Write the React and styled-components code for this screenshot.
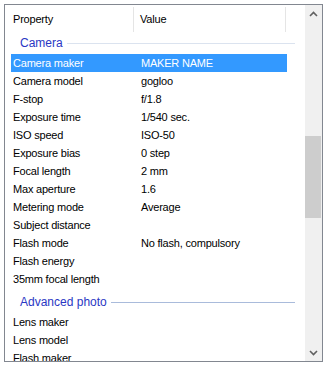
import React from 'react'
import styled, { createGlobalStyle } from 'styled-components'

const GlobalStyle = createGlobalStyle`
    body {
        margin: 0;
        background: #fff;
        font-family: "Liberation Sans", Arial, sans-serif;
        font-size: 11px;
        letter-spacing: -0.2px;
        color: #000;
    }
`

const Frame = styled.div`
    width: 317px;
    height: 356px;
    margin: 4px 0 0 4px;
    border: 1px solid #828790;
    display: flex;
    overflow: hidden;
    background: #fff;
`
const Content = styled.div`
    flex: 1;
    display: flex;
    flex-direction: column;
    overflow: hidden;
`
const Header = styled.div`
    height: 26px;
    flex-shrink: 0;
    display: grid;
    grid-template-columns: 129px 152px 1fr;
    align-items: start;
`
const HeaderCell = styled.div`
    display: flex;
    align-items: center;
    padding: 0 0 2px ${p => p.pad || 0}px;
    border-right: ${p => p.last ? 'none' : '1px solid #e5e5e5'};
    margin-top: 2px;
    height: 23px;
`
const GroupHeader = styled.div`
    height: 23px;
    flex-shrink: 0;
    margin-top: ${p => p.first ? 0 : 2}px;
    display: flex;
    align-items: center;
    gap: 4px;
    padding: 0 10px 0 15px;
    color: #2a37c4;
    font-size: 12px;
    letter-spacing: 0;
`
const GroupLine = styled.div`
    flex: 1;
    height: 1px;
    margin-top: 1px;
    background: ${p => p.faint ? '#dbe3ef' : '#a9bbdb'};
`
const Row = styled.div`
    height: 18px;
    flex-shrink: 0;
    width: 276px;
    margin-left: 6px;
    display: grid;
    grid-template-columns: 128px 1fr;
    align-items: center;
    white-space: nowrap;
    background: ${p => p.selected ? '#3399ff' : 'transparent'};
    color: ${p => p.selected ? '#fff' : '#000'};
`
const Cell = styled.span`
    padding-left: 2px;
    overflow: hidden;
`
const Scrollbar = styled.div`
    width: 17px;
    flex-shrink: 0;
    background: #f0f0f0;
    display: flex;
    flex-direction: column;
`
const Arrow = styled.div`
    height: 17px;
    display: flex;
    align-items: center;
    justify-content: center;
    color: #606060;
`
const Track = styled.div`
    flex: 1;
    padding-top: ${p => p.offset}px;
`
const Thumb = styled.div`
    height: 82px;
    width: 16px;
    background: #cdcdcd;
`

const groups = [
    {
        name: 'Camera',
        faint: true,
        rows: [
            ['Camera maker', 'MAKER NAME'],
            ['Camera model', 'gogloo'],
            ['F-stop', 'f/1.8'],
            ['Exposure time', '1/540 sec.'],
            ['ISO speed', 'ISO-50'],
            ['Exposure bias', '0 step'],
            ['Focal length', '2 mm'],
            ['Max aperture', '1.6'],
            ['Metering mode', 'Average'],
            ['Subject distance', ''],
            ['Flash mode', 'No flash, compulsory'],
            ['Flash energy', ''],
            ['35mm focal length', ''],
        ],
    },
    {
        name: 'Advanced photo',
        rows: [
            ['Lens maker', ''],
            ['Lens model', ''],
            ['Flash maker', ''],
        ],
    },
]

const Chevron = ({ up }) => (
    <svg width="9" height="6" viewBox="0 0 9 6">
        <path
            d={up ? 'M1 5 L4.5 1.5 L8 5' : 'M1 1 L4.5 4.5 L8 1'}
            fill="none"
            stroke="currentColor"
            strokeWidth="1.6"
        />
    </svg>
)

export default function App() {
    return (
        <>
            <GlobalStyle />
            <Frame>
                <Content>
                    <Header>
                        <HeaderCell pad={8}>Property</HeaderCell>
                        <HeaderCell pad={6}>Value</HeaderCell>
                        <HeaderCell last />
                    </Header>
                    {groups.map((g, gi) => (
                        <React.Fragment key={g.name}>
                            <GroupHeader first={gi === 0}>
                                {g.name}
                                <GroupLine faint={g.faint} />
                            </GroupHeader>
                            {g.rows.map(([k, v], i) => (
                                <Row key={k} selected={gi === 0 && i === 0}>
                                    <Cell>{k}</Cell>
                                    <Cell>{v}</Cell>
                                </Row>
                            ))}
                        </React.Fragment>
                    ))}
                </Content>
                <Scrollbar>
                    <Arrow><Chevron up /></Arrow>
                    <Track offset={114}>
                        <Thumb />
                    </Track>
                    <Arrow><Chevron /></Arrow>
                </Scrollbar>
            </Frame>
        </>
    )
}
